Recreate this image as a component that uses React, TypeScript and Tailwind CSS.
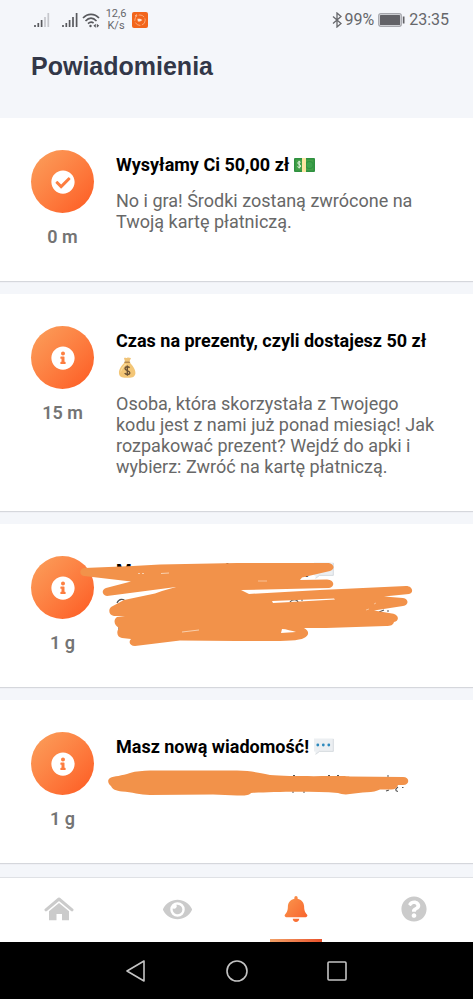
import type { ReactNode } from 'react';
import { FaBell, FaCheckCircle, FaEye, FaInfoCircle, FaQuestionCircle } from 'react-icons/fa';

function CashEmoji() {
  return (
    <svg viewBox="0 0 21 14" className="inline-block w-[21px] h-[14px] align-[-1px]" aria-hidden="true">
      <rect width="21" height="14" rx="1" fill="#2f9140" />
      <rect x="1.5" y="1.5" width="18" height="11" fill="#43a047" />
      <circle cx="15.5" cy="7" r="4" fill="#2f9440" />
      <circle cx="15.5" cy="7" r="3" fill="#3fa34c" />
      <rect x="8" width="4" height="14" fill="#fbe6a2" />
      <path d="M6.6 4.3C5.5 3.3 3.6 3.7 3.8 5.1C4 6.6 6.7 6.4 6.7 8.1C6.7 9.7 4.4 9.8 3.4 8.6M5.2 2.8V10.4" fill="none" stroke="#e5f3df" strokeWidth="1" />
    </svg>
  );
}

function MoneyBagEmoji() {
  return (
    <svg viewBox="0 0 21 21" className="inline-block w-[21px] h-[21px] align-[-4px]" aria-hidden="true">
      <path d="M8 1.2C9 .2 10 1.6 11.2.8C12.4.1 13.6 1.2 15 1.1L13 5.5H9.3Z" fill="#f0c479" />
      <path d="M9 5C6 8 2.5 12 3 16.4C3.5 20.6 7.5 20.8 11.2 20.8C15 20.8 19 20.4 19.4 16.4C19.8 12 16 8 13.4 5Z" fill="#f3c677" />
      <path d="M9 7C6.5 10 4.3 12.5 4.5 16C6 11.5 8.5 9 11 7Z" fill="#fbe0a5" />
      <rect x="8.2" y="4.4" width="6" height="1.5" rx=".7" fill="#b58a50" />
      <path d="M13.6 10.7C12.4 9.3 9 9.4 9 11.6C9 14 13.8 13.1 13.8 15.7C13.8 18 10 18 8.7 16.2M11.3 8.4V18.8" fill="none" stroke="#6b5134" strokeWidth="1.4" />
    </svg>
  );
}

function ChatEmoji() {
  return (
    <svg viewBox="0 0 21 17" className="inline-block w-[21px] h-[17px] align-[-2px]" aria-hidden="true">
      <path d="M1 .5H20.5V13.5H6.5L2.5 16.5V13.5H1Z" fill="#eceff2" />
      <path d="M20.3 1V13.4H6.5L2.6 16.4" fill="none" stroke="#cfd4d9" strokeWidth=".8" />
      <circle cx="4.8" cy="7" r="1.4" fill="#2c89bd" />
      <circle cx="10.3" cy="7" r="1.4" fill="#2c89bd" />
      <circle cx="15.8" cy="7" r="1.4" fill="#2c89bd" />
    </svg>
  );
}

// Marker strokes over the first private message
function WideScribble() {
  return (
    <svg viewBox="0 0 473 163" className="absolute left-0 top-0 w-[473px] h-[163px] pointer-events-none" aria-hidden="true">
      <g fill="none" stroke="#555" strokeWidth="1.2">
        <path d="M117 79C119 74 124 75 125 77" />
        <path d="M119 101V107M119 102C123 101 123 105 119 106" />
        <path d="M290 78C292 75 297 75 298 78M301 76H303" />
        <path d="M379 88L384 86M387 87H389" />
      </g>
      <path
        fill="#f2924a"
        fillRule="evenodd"
        d="M84 44L133 42L160 40.5L237 39L327 39C334 39 336 45 330 47L302 53.5L300 56L327 55.5C335 56 335 63 329 64L241 66L249 70L320 66L406 62C413 62 414 69 409 70L384 72.5L403 74C409 75 409 81 403 82L374 86.5L392 89.5C400 91 399 97 394 98C393 101 391 102 386 102L326 104L304 104C310 107 309 112 304 114C297 118 270 117 236 117L180 116.5L135 122C130 122 128 118 131 115L122 114C117 113 116 108 119 104C114 101 113 96 117 93L125 92H114C109 91 108 86 111 83L124 76L155 69.5L162 67L176 63L107 72C102 71 101 66 106 64L131 57.5L84 52C79 51 79 45 84 44ZM272 77L334 74.5L335 75.5L300 77.5L273 79ZM282 105C286 105 292 107 296 108L281 109Z"
      />
      <path d="M138 49.5H140M142 49.5H144M161 49.5L169 49M182 108L199 106" stroke="#fbe9d9" strokeWidth=".7" />
      <path d="M366 86L369 85M374 80L376 79M258 57H267" stroke="#f9c79f" strokeWidth=".9" />
    </svg>
  );
}

function LineScribble() {
  return (
    <svg viewBox="0 0 473 163" className="absolute left-0 top-0 w-[473px] h-[163px] pointer-events-none" aria-hidden="true">
      <path
        d="M293 75.5H295M328 75.5H330M337 75.5H339M387 76H389M292 92H294M303 92H305M386 91L389 90M398 87C395 89 395 91 398 91.5M402 87.5H403.5"
        fill="none"
        stroke="#555"
        strokeWidth="1.2"
      />
      <path
        fill="#f2924a"
        d="M110 78C114 76 122 76 130 73C136 71 143 71 150 70.5L237 70.5C252 71 262 73 270 75C290 77 340 75.5 350 76.5L403 77C410 77 410 85 403 85L398 85C397 88 395 89.5 391 89.5H380C374 93 361 92 350 94C345 95 341 94 338 93C310 91 270 92 251 93C249 96 243 95.5 237 95.5L213 94.5L150 95C140 95 132 92 122 91.5C116 91 112 89 111 86C108 84 107 80 110 78Z"
      />
    </svg>
  );
}

type Notification = {
  id: number;
  icon: ReactNode;
  age: string;
  title: string;
  emoji: ReactNode;
  body?: string;
  cover?: ReactNode;
};

const notifications: Notification[] = [
  {
    id: 1,
    icon: <FaCheckCircle />,
    age: '0 m',
    title: 'Wysyłamy Ci 50,00 zł',
    emoji: <CashEmoji />,
    body: 'No i gra! Środki zostaną zwrócone na Twoją kartę płatniczą.',
  },
  {
    id: 2,
    icon: <FaInfoCircle />,
    age: '15 m',
    title: 'Czas na prezenty, czyli dostajesz 50 zł',
    emoji: <MoneyBagEmoji />,
    body: 'Osoba, która skorzystała z Twojego kodu jest z nami już ponad miesiąc! Jak rozpakować prezent? Wejdź do apki i wybierz: Zwróć na kartę płatniczą.',
  },
  {
    id: 3,
    icon: <FaInfoCircle />,
    age: '1 g',
    title: 'Masz nową wiadomość!',
    emoji: <ChatEmoji />,
    cover: <WideScribble />,
  },
  {
    id: 4,
    icon: <FaInfoCircle />,
    age: '1 g',
    title: 'Masz nową wiadomość!',
    emoji: <ChatEmoji />,
    cover: <LineScribble />,
  },
];

function StatusBar() {
  return (
    <div className="h-10 flex items-center justify-between pl-[34px] pr-6 text-[#66676b]">
      <div className="flex items-center">
        <svg viewBox="0 0 16 15" className="w-4 h-[15px]" aria-hidden="true">
          <path d="M1 12V14M4.3 10V14M7.6 7V14" stroke="#58595d" strokeWidth="1.7" />
          <path d="M11 4V14M14.3 0V14" stroke="#c6c7cc" strokeWidth="1.7" />
        </svg>
        <svg viewBox="0 0 16 15" className="ml-3 w-4 h-[15px]" aria-hidden="true">
          <path d="M1 12V14M4.3 10V14M7.6 7V14M11 4V14M14.6 0V14" stroke="#58595d" strokeWidth="1.7" />
        </svg>
        <svg viewBox="0 0 18 15" className="ml-1 w-[18px] h-[15px]" fill="none" stroke="#58595d" strokeWidth="1.6" aria-hidden="true">
          <path d="M1 5C5.5.2 12.5.2 17 5M3.5 8C7 4.2 11 4.2 14.5 8M6 10.6C8 8.8 10 8.8 11.6 10" />
          <circle cx="8.5" cy="13" r="1.2" fill="#58595d" stroke="none" />
          <path d="M13.8 10.8L11.4 12.8L13.8 14.8ZM14.8 10.8L17.2 12.8L14.8 14.8Z" fill="#58595d" stroke="none" />
        </svg>
        <div className="ml-1 w-6 text-[11px] leading-3 text-center">
          12,6
          <br />
          K/s
        </div>
        <svg viewBox="0 0 16 16" className="ml-1 size-4" aria-hidden="true">
          <rect width="16" height="16" rx="2" fill="#f2651b" />
          <circle cx="8" cy="8.2" r="5.2" fill="none" stroke="#fbb78d" strokeWidth=".8" strokeDasharray="6 1.5" />
          <path d="M5.4 6.7H8L10.4 8L8 9.6H5.9Z" fill="#fde5d4" />
          <path d="M3 4.3L5 2.7" stroke="#ffe2cf" strokeWidth="1" />
        </svg>
      </div>
      <div className="flex items-center">
        <svg viewBox="0 0 10 16" className="w-[10px] h-4" fill="none" stroke="#66676b" strokeWidth="1.3" aria-hidden="true">
          <path d="M1 4.5L9 11.5L5 15V1L9 4.5L1 11.5" />
        </svg>
        <span className="ml-0.5 text-base leading-5">99%</span>
        <svg viewBox="0 0 27 14" className="ml-1 w-[27px] h-[14px]" aria-hidden="true">
          <rect x=".7" y=".7" width="22.6" height="12.6" rx="2" fill="#d9dade" stroke="#a5a6ac" strokeWidth="1.2" />
          <rect x="2" y="2" width="20" height="10" rx=".5" fill="#626267" />
          <rect x="24.8" y="3.5" width="1.7" height="7" fill="#626267" />
        </svg>
        <span className="ml-1 text-base leading-5">23:35</span>
      </div>
    </div>
  );
}

function NotificationCard({ item }: { item: Notification }) {
  return (
    <article className="relative bg-white flex gap-[22px] pl-[31px] pr-8 py-8 shadow-[0_1px_1px_#d5d7dc]">
      <div className="w-[63px] shrink-0 flex flex-col items-center">
        <div className="size-[63px] rounded-full bg-linear-to-br from-[#faa05c] to-[#fd581f] flex items-center justify-center text-white text-2xl">
          {item.icon}
        </div>
        <span className="mt-3 text-lg leading-6 font-semibold text-[#747474]">{item.age}</span>
      </div>
      <div className="flex-1 min-w-0 pt-px pb-[2px]">
        <h2 className="text-lg leading-[27px] font-bold text-black">
          {item.title} {item.emoji}
        </h2>
        {item.body && <p className="mt-3 text-lg leading-[21px] text-[#686868]">{item.body}</p>}
      </div>
      {item.cover}
    </article>
  );
}

function TabBar() {
  return (
    <nav className="sticky bottom-0 z-10">
      <div className="h-[65px] pb-0.5 bg-white border-t border-[#dfe1e5] grid grid-cols-4 text-[#cbcbcb]">
        <a href="#home" aria-label="Start" className="flex items-center justify-center">
          <svg viewBox="0 0 30 24" className="w-[30px] h-6" aria-hidden="true">
            <path d="M2 12.8L15 2L28 12.8" fill="none" stroke="currentColor" strokeWidth="3" strokeLinecap="round" strokeLinejoin="round" />
            <path d="M15 6L25 14.2V23.2H18V17H12.5V23.2H5V14.2Z" fill="currentColor" />
          </svg>
        </a>
        <a href="#preview" aria-label="Podgląd" className="flex items-center justify-center text-[29px]">
          <FaEye />
        </a>
        <a href="#notifications" aria-label="Powiadomienia" className="relative flex items-center justify-center text-[26px]">
          <svg width="0" height="0" className="absolute" aria-hidden="true">
            <linearGradient id="bell" x1="0" y1="0" x2="1" y2="1">
              <stop offset="0" stopColor="#f9984f" />
              <stop offset="1" stopColor="#f9602a" />
            </linearGradient>
          </svg>
          <FaBell fill="url(#bell)" />
          <span className="absolute -bottom-0.5 w-[52px] h-[3px] bg-linear-to-r from-[#f0a067] to-[#e8502a]" />
        </a>
        <a href="#help" aria-label="Pomoc" className="flex items-center justify-center text-[26px]">
          <FaQuestionCircle />
        </a>
      </div>
      <div className="h-[57px] bg-black flex items-center justify-center gap-[78px] text-[#c4c4c4]">
        <button aria-label="Wstecz">
          <svg viewBox="0 0 22 24" className="w-[22px] h-6" fill="none" stroke="currentColor" strokeWidth="1.6" strokeLinejoin="round" aria-hidden="true">
            <path d="M18 2V22L1 12Z" />
          </svg>
        </button>
        <button aria-label="Ekran główny">
          <svg viewBox="0 0 22 22" className="size-[22px]" fill="none" stroke="currentColor" strokeWidth="1.6" aria-hidden="true">
            <circle cx="11" cy="11" r="10" />
          </svg>
        </button>
        <button aria-label="Ostatnie">
          <svg viewBox="0 0 22 22" className="size-[22px]" fill="none" stroke="currentColor" strokeWidth="1.6" aria-hidden="true">
            <rect x="2" y="2" width="18" height="18" rx="1" />
          </svg>
        </button>
      </div>
    </nav>
  );
}

export default function App() {
  return (
    <div className="min-h-screen bg-[#f4f6fa] flex flex-col font-['Roboto',sans-serif]">
      <header className="pb-[35px]">
        <StatusBar />
        <h1 className="mt-[9px] pl-[31px] text-[25px] leading-[34px] font-bold text-[#323748] font-['Liberation_Sans',sans-serif]">
          Powiadomienia
        </h1>
      </header>
      <main className="flex-1 flex flex-col gap-[13px] pb-[14px]">
        {notifications.map((item) => (
          <NotificationCard key={item.id} item={item} />
        ))}
      </main>
      <TabBar />
    </div>
  );
}
